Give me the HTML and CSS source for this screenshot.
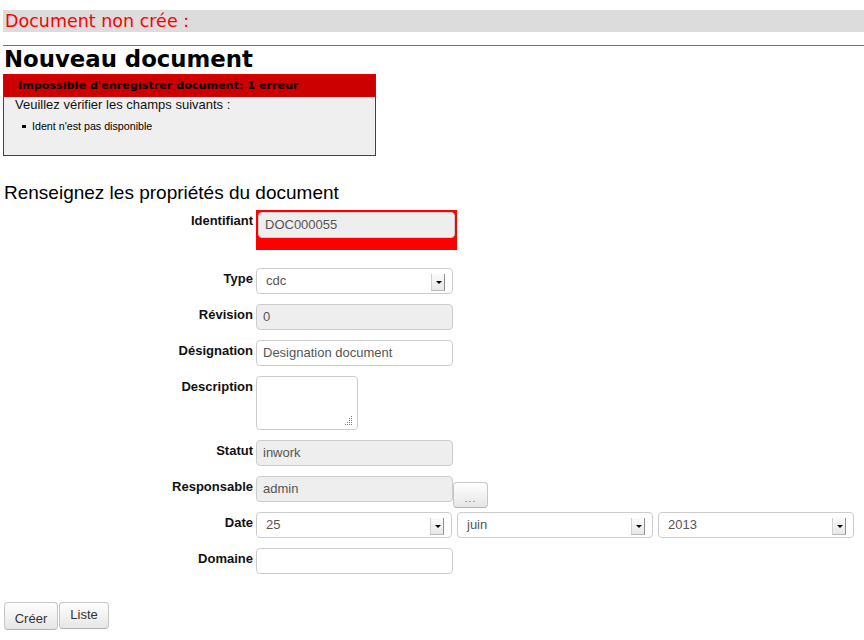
FILE: index.html
```html
<!DOCTYPE html>
<html lang="fr">
<head>
<meta charset="utf-8">
<title>Nouveau document</title>
<link rel="stylesheet" href="styles.css">
</head>
<body>
<div class="flash">Document non crée :</div>
<div class="rule"></div>
<h1 class="title">Nouveau document</h1>
<div class="errors">
  <div class="errors-head">Impossible d'enregistrer document: 1 erreur</div>
  <div class="errors-body">
    <p class="errors-intro">Veuillez vérifier les champs suivants :</p>
    <ul class="errors-list"><li>Ident n'est pas disponible</li></ul>
  </div>
</div>
<h2 class="subtitle">Renseignez les propriétés du document</h2>
<form class="form">
  <div class="row row-error">
    <label class="lbl">Identifiant</label>
    <div class="field-error"><div class="input disabled">DOC000055</div></div>
  </div>
  <div class="row">
    <label class="lbl">Type</label>
    <div class="select"><span class="sel-text">cdc</span><span class="arrow"><span class="tri"></span></span></div>
  </div>
  <div class="row">
    <label class="lbl">Révision</label>
    <div class="input disabled">0</div>
  </div>
  <div class="row">
    <label class="lbl">Désignation</label>
    <div class="input">Designation document</div>
  </div>
  <div class="row">
    <label class="lbl">Description</label>
    <div class="textarea">
      <svg class="grip" width="11" height="11" viewBox="0 0 11 11"><g fill="#7a7a7a"><rect x="9" y="1" width="1" height="1"/><rect x="9" y="3" width="1" height="1"/><rect x="9" y="5" width="1" height="1"/><rect x="9" y="7" width="1" height="1"/><rect x="9" y="9" width="1" height="1"/><rect x="7" y="3" width="1" height="1"/><rect x="7" y="5" width="1" height="1"/><rect x="7" y="7" width="1" height="1"/><rect x="7" y="9" width="1" height="1"/><rect x="5" y="7" width="1" height="1"/><rect x="5" y="9" width="1" height="1"/><rect x="3" y="9" width="1" height="1"/></g></svg>
    </div>
  </div>
  <div class="row">
    <label class="lbl">Statut</label>
    <div class="input disabled">inwork</div>
  </div>
  <div class="row">
    <label class="lbl">Responsable</label>
    <div class="input disabled">admin</div>
    <button type="button" class="btn btn-dots">...</button>
  </div>
  <div class="row">
    <label class="lbl">Date</label>
    <div class="dates">
      <div class="select date"><span class="sel-text">25</span><span class="arrow"><span class="tri"></span></span></div>
      <div class="select date"><span class="sel-text">juin</span><span class="arrow"><span class="tri"></span></span></div>
      <div class="select date"><span class="sel-text">2013</span><span class="arrow"><span class="tri"></span></span></div>
    </div>
  </div>
  <div class="row">
    <label class="lbl">Domaine</label>
    <div class="input"></div>
  </div>
  <div class="actions">
    <button type="button" class="btn btn-create">Créer</button>
    <button type="button" class="btn btn-list">Liste</button>
  </div>
</form>
</body>
</html>
```

FILE: styles.css
```css
* { box-sizing: border-box; }
html, body { margin: 0; padding: 0; background: #fff; }
body {
  padding: 10px 0 0 3px;
  font-family: "Liberation Sans", Arial, sans-serif;
  font-size: 13px;
  color: #000;
}
.flash {
  height: 22px;
  line-height: 22px;
  background: #dcdcdc;
  color: #ff0000;
  font-family: "DejaVu Sans", sans-serif;
  font-size: 17.5px;
  padding-left: 2px;
}
.rule {
  margin-top: 13px;
  border-top: 1px solid #747474;
}
.title {
  margin: 0 0 2px 1px;
  font-family: "DejaVu Sans", sans-serif;
  font-weight: bold;
  font-size: 22.8px;
  line-height: 26px;
}
.errors {
  width: 373px;
  border: 1px solid #e00000;
  background: #efefef;
}
.errors-head {
  height: 22px;
  line-height: 22px;
  background: #cc0000;
  color: #000;
  font-family: "DejaVu Sans", sans-serif;
  font-weight: bold;
  font-size: 11px;
  letter-spacing: 0.1px;
  padding-left: 14px;
}
.errors-body {
  padding: 0 0 23px 11px;
}
.errors-intro {
  margin: 0;
  line-height: 15px;
  font-size: 13px;
  color: #111;
}
.errors-list {
  list-style: none;
  margin: 8px 0 0 0;
  padding: 0 0 0 17px;
  font-size: 10.7px;
  line-height: 12px;
}
.errors-list li { position: relative; }
.errors-list li::before {
  content: "";
  position: absolute;
  left: -10px;
  top: 5px;
  width: 4px;
  height: 3px;
  background: #000;
}
.subtitle {
  margin: 26px 0 6px 1px;
  font-weight: normal;
  font-size: 19px;
  line-height: 22px;
}
.form { margin: 0; }
.row {
  display: flex;
  align-items: flex-start;
  margin-bottom: 10px;
}
.row-error { margin-bottom: 18px; }
.lbl {
  width: 250px;
  margin-right: 3px;
  text-align: right;
  font-weight: bold;
  font-size: 13px;
  line-height: 15px;
  padding-top: 3px;
  color: #111;
}
.field-error {
  background: #ff0000;
  padding: 2px 2px 12px 2px;
}
.input {
  width: 197px;
  height: 26px;
  line-height: 24px;
  border: 1px solid #cccccc;
  border-radius: 4px;
  padding-left: 6px;
  background: #fff;
  color: #555;
  font-size: 13px;
}
.input.disabled { background: #eeeeee; }
.select {
  position: relative;
  width: 197px;
  height: 26px;
  line-height: 24px;
  border: 1px solid #cccccc;
  border-radius: 4px;
  padding-left: 9px;
  background: #fff;
  color: #555;
  font-size: 13px;
}
.arrow {
  position: absolute;
  right: 7px;
  top: 5px;
  width: 14px;
  height: 17px;
  background: linear-gradient(#fbfbfb, #e6e8ea);
  border-left: 1px solid #d0d0d0;
  border-right: 1px solid #8e8e8e;
  border-bottom: 1px solid #b8b8b8;
}
.tri {
  position: absolute;
  left: 4px;
  top: 7px;
  width: 0;
  height: 0;
  border-left: 3px solid transparent;
  border-right: 3px solid transparent;
  border-top: 3px solid #000;
}
.textarea {
  position: relative;
  width: 102px;
  height: 54px;
  border: 1px solid #cccccc;
  border-radius: 4px;
  background: #fff;
}
.grip {
  position: absolute;
  right: 4px;
  bottom: 3px;
}
.dates {
  display: flex;
  gap: 5px;
}
.select.date { width: 196px; }
.btn {
  font-family: "Liberation Sans", Arial, sans-serif;
  font-size: 13px;
  color: #333;
  background: linear-gradient(#ffffff, #e6e6e6);
  border: 1px solid #c6c6c6;
  border-bottom-color: #b3b3b3;
  border-radius: 4px;
  margin: 0;
  cursor: pointer;
}
.btn-dots {
  width: 35px;
  height: 26px;
  margin-top: 6px;
  margin-bottom: -6px;
  padding: 6px 0 0 0;
  font-size: 10px;
  color: #666;
  letter-spacing: 1px;
}
.actions {
  display: flex;
  align-items: flex-start;
  gap: 1px;
  margin-top: 28px;
  margin-left: 1px;
}
.btn-create {
  width: 54px;
  height: 28px;
  padding: 5px 0 0 0;
}
.btn-list {
  width: 50px;
  height: 27px;
  padding: 0 0 3px 0;
}
```
